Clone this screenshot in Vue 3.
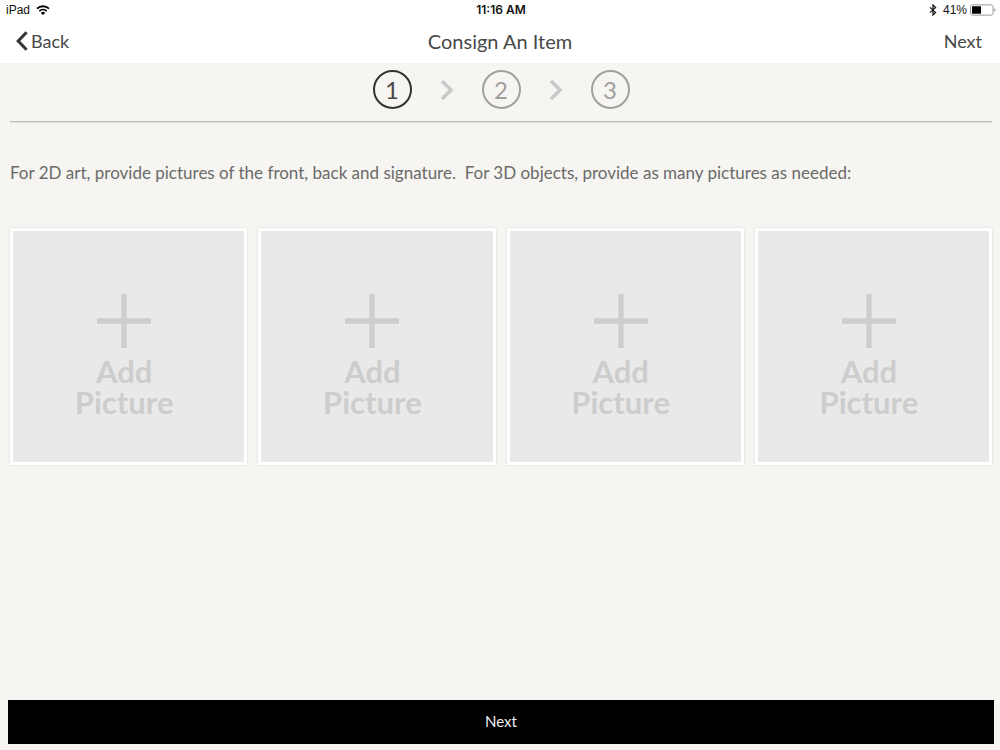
<script setup>
const steps = [1, 2, 3]
const pictures = [1, 2, 3, 4]
</script>

<template>
  <div class="screen">
    <header class="top">
      <div class="status">
        <div class="side">
          <span>iPad</span>
          <svg class="wifi" width="14" height="10" viewBox="0 0 14 10" aria-hidden="true">
            <path d="M7 10 4.9 7.9a3 3 0 0 1 4.2 0z" fill="#000" />
            <path d="M3.3 6.1a5.3 5.3 0 0 1 7.4 0M1 3.7a8.6 8.6 0 0 1 12 0" fill="none" stroke="#000" stroke-width="1.8" />
          </svg>
        </div>
        <span class="time">11:16 AM</span>
        <div class="side end">
          <svg width="8" height="12" viewBox="0 0 8 12" aria-hidden="true">
            <path d="M1 3.4 6.6 8.4 4 11V1l2.6 2.6L1 8.6" fill="none" stroke="#111" stroke-width="1.2" />
          </svg>
          <span class="percent">41%</span>
          <svg width="26" height="12" viewBox="0 0 26 12" aria-hidden="true">
            <rect x=".5" y=".9" width="22.6" height="10.2" rx="1.8" fill="#fff" stroke="#999" />
            <rect x="2" y="2.3" width="9" height="7.4" fill="#000" />
            <path d="M24.4 4.2q1.3.5 1.3 1.8t-1.3 1.8z" fill="#999" />
          </svg>
        </div>
      </div>
      <nav class="bar">
        <button type="button" class="link">
          <svg width="12" height="20" viewBox="0 0 12 20" aria-hidden="true">
            <path d="M10.6 1.2 2.2 10l8.4 8.8" fill="none" stroke="#333" stroke-width="3" />
          </svg>
          <span>Back</span>
        </button>
        <h1>Consign An Item</h1>
        <button type="button" class="link forward">Next</button>
      </nav>
    </header>

    <main>
      <ol class="steps">
        <template v-for="n in steps" :key="n">
          <li v-if="n > 1" class="arrow" aria-hidden="true">
            <svg width="14" height="20" viewBox="0 0 14 20">
              <path d="M2 1l9 9-9 9" fill="none" stroke="#c9c9c9" stroke-width="3.6" />
            </svg>
          </li>
          <li class="step" :class="{ current: n === 1 }">{{ n }}</li>
        </template>
      </ol>

      <p class="hint">For 2D art, provide pictures of the front, back and signature.&nbsp; For 3D objects, provide as many pictures as needed:</p>

      <div class="grid">
        <button v-for="p in pictures" :key="p" type="button" class="card">
          <svg width="54" height="54" viewBox="0 0 54 54" aria-hidden="true">
            <path d="M27 0v54M0 27h54" fill="none" stroke="#cdcdcd" stroke-width="5.4" />
          </svg>
          <span>Add<br />Picture</span>
        </button>
      </div>
    </main>

    <footer>
      <button type="button" class="next">Next</button>
    </footer>
  </div>
</template>

<style>
body {
  background: #f6f5f1;
}
</style>

<style scoped>
.screen {
  min-height: 100vh;
  display: flex;
  flex-direction: column;
  background: #f6f5f1;
  font-family: Lato, "Open Sans", sans-serif;
  color: #484848;
}
button {
  margin: 0;
  padding: 0;
  border: 0;
  background: none;
  font: inherit;
  color: inherit;
  cursor: pointer;
}
svg {
  display: block;
  flex: none;
}
.top {
  background: #fff;
}
.status {
  display: grid;
  grid-template-columns: 1fr auto 1fr;
  align-items: center;
  height: 20px;
  padding: 0 4px 0 6px;
  font: 12px/20px "Liberation Sans", Inter, sans-serif;
  color: #111;
}
.side {
  display: flex;
  align-items: center;
  gap: 6px;
}
.end {
  justify-content: flex-end;
}
.percent {
  margin-right: -3px;
}
.time {
  font-family: Inter, "Liberation Sans", sans-serif;
  font-weight: 600;
}
.bar {
  display: grid;
  grid-template-columns: 1fr auto 1fr;
  align-items: center;
  height: 43px;
  box-sizing: border-box;
  padding: 0 18px 2px;
}
h1 {
  margin: 0;
  font-size: 20px;
  font-weight: 400;
  line-height: 24px;
}
.link {
  display: flex;
  align-items: center;
  gap: 3px;
  justify-self: start;
  margin-left: -2px;
  font-size: 18px;
  line-height: 24px;
}
.forward {
  justify-self: end;
}
.steps {
  display: flex;
  justify-content: center;
  align-items: center;
  margin: 0 8px 0 10px;
  padding: 7px 0 12px;
  border-bottom: 1px solid #c0bfbc;
  box-shadow: 0 1px 0 #deddda;
  list-style: none;
}
.step {
  box-sizing: border-box;
  width: 39px;
  height: 39px;
  border: 2px solid #a0a0a0;
  border-radius: 50%;
  color: #a0a0a0;
  font-size: 24px;
  line-height: 35px;
  text-align: center;
}
.current {
  border-color: #333;
  color: #484848;
}
.arrow {
  width: 70px;
  display: flex;
  justify-content: center;
}
.hint {
  margin: 39px 8px 0 10px;
  font-size: 17px;
  line-height: 24px;
  color: #6a6a6a;
}
.grid {
  display: grid;
  grid-template-columns: repeat(4, 1fr);
  gap: 11px;
  padding: 43px 8px 20px 10px;
}
.card {
  box-sizing: border-box;
  aspect-ratio: 1;
  display: flex;
  flex-direction: column;
  align-items: center;
  justify-content: center;
  gap: 8px;
  padding: 19px 9px 0 0;
  border: 3px solid #fff;
  background: #e9e9e9;
  box-shadow: 0 0 2px rgba(0, 0, 0, 0.14);
  color: #cdcdcd;
  font-size: 31px;
  font-weight: 700;
  line-height: 31px;
}
footer {
  margin-top: auto;
  padding: 0 6px 6px 8px;
}
.next {
  display: block;
  width: 100%;
  height: 44px;
  padding-bottom: 2px;
  background: #000;
  color: #eee;
  font-size: 15px;
}
</style>
